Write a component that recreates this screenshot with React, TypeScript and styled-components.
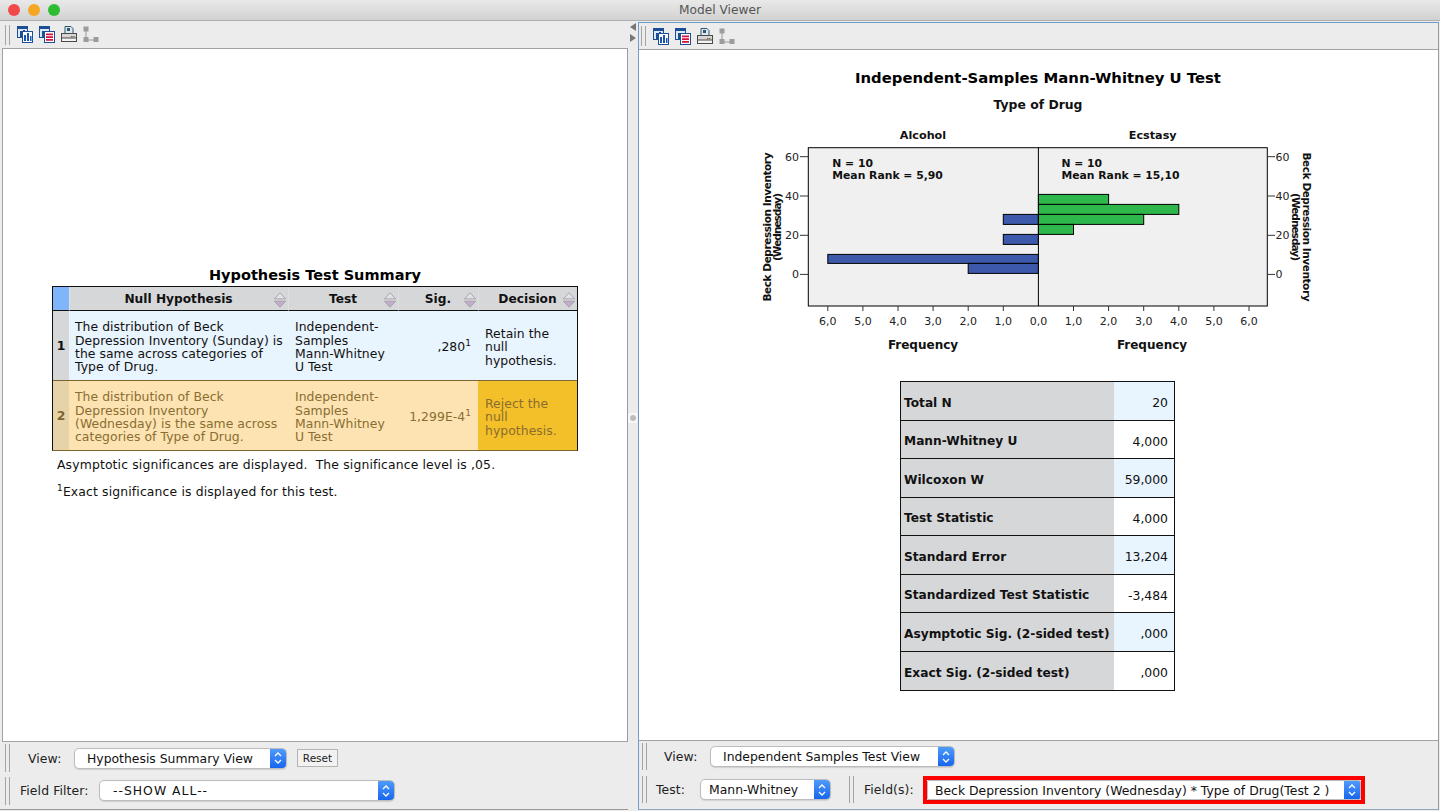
import * as React from 'react';
import styled, { createGlobalStyle } from 'styled-components';

const FONT = '"DejaVu Sans", "Noto Sans", sans-serif';

const GlobalStyle = createGlobalStyle`
  html, body {
    margin: 0;
    padding: 0;
    background: #ececec;
    font-family: ${FONT};
    overflow: hidden;
  }
  * { box-sizing: border-box; }
`;

const Window = styled.div`
  width: 1440px;
  height: 811px;
  display: flex;
  flex-direction: column;
  background: #ececec;
  color: #111;
`;

const TitleBar = styled.div`
  height: 21px;
  flex: none;
  display: grid;
  grid-template-columns: 200px 1fr 200px;
  align-items: center;
  background: linear-gradient(#e9e9e9, #d2d2d2);
  border-bottom: 1px solid #aeaeae;
`;

const Lights = styled.div`
  display: flex;
  gap: 8px;
  padding-left: 8px;
`;

const Light = styled.span<{ $color: string }>`
  width: 12px;
  height: 12px;
  border-radius: 50%;
  background: ${(p) => p.$color};
`;

const WindowTitle = styled.div`
  text-align: center;
  font-size: 12.2px;
  color: #555;
`;

const Panes = styled.div`
  flex: 1;
  display: grid;
  grid-template-columns: 628px 10px 802px;
  min-height: 0;
`;

const LeftPane = styled.section`
  display: flex;
  flex-direction: column;
  padding-left: 2px;
  margin-bottom: 1px;
  border-bottom: 1px solid #9a9a9a;
  min-height: 0;
`;

const RightPane = styled.section`
  display: flex;
  flex-direction: column;
  border: 1px solid #6d9ccb;
  border-bottom-color: #8fa6ba;
  border-right-color: #9a9a9a;
  margin: 1px 1px 1px 0;
  min-height: 0;
`;

const Toolbar = styled.div<{ $pad: number; $h: number }>`
  height: ${(p) => p.$h}px;
  flex: none;
  display: flex;
  align-items: center;
  gap: 6px;
  padding-left: ${(p) => p.$pad}px;
`;

const Grip = styled.span<{ $h: number }>`
  flex: none;
  width: 5px;
  height: ${(p) => p.$h}px;
  border-left: 1px solid #a4a4a4;
  border-right: 1px solid #a4a4a4;
`;

const ToolIcons = styled.div`
  display: flex;
  gap: 6px;
  margin-left: 1px;
`;

const Splitter = styled.div`
  display: flex;
  flex-direction: column;
  align-items: flex-start;
  padding-top: 2px;
  gap: 3px;
`;

const SplitArrow = styled.svg`
  display: block;
  margin-left: 2px;
`;

const SplitHandle = styled.div`
  margin-top: 368px;
  width: 9px;
  height: 10px;
  background: #f8f8f8;
  display: flex;
  align-items: center;
  justify-content: center;
  &::after {
    content: '';
    width: 6px;
    height: 6px;
    border-radius: 50%;
    background: #bdbdbd;
  }
`;

const LeftCanvas = styled.div`
  flex: 1;
  min-height: 0;
  background: #fff;
  border: 1px solid #a2a2a2;
  border-right-color: #9a9a9a;
  padding: 216px 0 0 49px;
`;

const RightCanvas = styled.div`
  height: 692px;
  flex: none;
  background: #fff;
  border-top: 1px solid #a2a2a2;
  border-bottom: 1px solid #a2a2a2;
  display: flex;
  flex-direction: column;
  align-items: center;
  padding: 18px 1px 0 0;
`;

const SummaryTitle = styled.h2`
  margin: 0 0 1px;
  width: 526px;
  text-align: center;
  font-size: 14.5px;
  line-height: 20px;
  font-weight: 700;
  color: #000;
`;

const SummaryGrid = styled.div`
  width: 526px;
  display: grid;
  grid-template-columns: 16px 219px 110px 80px 99px;
  grid-template-rows: 24px 69px 70px;
  border: 1px solid #111;
  border-bottom-color: #7d6430;
  font-size: 12.4px;
  line-height: 13.4px;
  letter-spacing: 0.05px;
`;

const Corner = styled.div`
  background: #80b5fb;
  border-bottom: 1px solid #111;
`;

const HeaderCell = styled.div`
  display: flex;
  align-items: center;
  background: #d6d7d9;
  border-bottom: 1px solid #111;
  border-left: 1px solid #dedfe1;
  padding: 3px 1px 0 14px;
  font-weight: 700;
  font-size: 12.2px;
  letter-spacing: 0;
  color: #111;
`;

const HeaderLabel = styled.span`
  flex: 1;
  text-align: center;
`;

const RowHead = styled.div<{ $reject?: boolean }>`
  display: flex;
  align-items: center;
  justify-content: center;
  font-weight: 700;
  background: ${(p) => (p.$reject ? '#e6d3a7' : '#d6d7d9')};
  color: ${(p) => (p.$reject ? '#7d6430' : '#111')};
  border-top: ${(p) => (p.$reject ? '1px solid #7d6430' : '0')};
`;

const BodyCell = styled.div<{ $reject?: boolean; $decision?: boolean; $right?: boolean; $inset: number }>`
  display: flex;
  align-items: center;
  justify-content: ${(p) => (p.$right ? 'flex-end' : 'flex-start')};
  padding: 3px ${(p) => (p.$right ? 7 : 0)}px 0 ${(p) => p.$inset}px;
  background: ${(p) => (p.$decision && p.$reject ? '#f4c029' : p.$reject ? '#fce3b1' : '#e8f4fe')};
  color: ${(p) => (p.$reject ? '#8a6d31' : '#111')};
  border-top: ${(p) => (p.$reject ? '1px solid #7d6430' : '0')};
  white-space: pre-line;
`;

const Note = styled.p`
  margin: 0;
  padding-left: 5px;
  font-size: 12.4px;
  line-height: 15px;
  letter-spacing: 0.14px;
  color: #111;
  white-space: pre-wrap;
`;

const FirstNote = styled(Note)`
  margin-top: 6px;
`;

const SecondNote = styled(Note)`
  margin-top: 12px;
`;

const Super = styled.sup`
  font-size: 9px;
  line-height: 0;
`;

const ChartTitle = styled.h2`
  margin: 0;
  font-size: 14.85px;
  line-height: 20px;
  font-weight: 700;
  color: #000;
`;

const ChartSubTitle = styled.h3`
  margin: 8px 0 0;
  font-size: 12.4px;
  line-height: 18px;
  font-weight: 700;
  color: #111;
`;

const ChartSvg = styled.svg`
  display: block;
  flex: none;
  margin-top: 8px;
  font-family: ${FONT};
`;

const StatsTable = styled.div`
  margin: 23px 1px 0 0;
  width: 275px;
  border: 1px solid #111;
  display: grid;
  grid-template-columns: 213px 60px;
  grid-auto-rows: 38.5px;
`;

const StatLabel = styled.div<{ $last?: boolean }>`
  display: flex;
  align-items: center;
  padding: 4px 0 0 3px;
  background: #d6d7d9;
  font-size: 12.2px;
  font-weight: 700;
  color: #111;
  white-space: nowrap;
  border-bottom: ${(p) => (p.$last ? '0' : '1px solid #111')};
`;

const StatValue = styled.div<{ $tint: boolean; $last?: boolean }>`
  display: flex;
  align-items: center;
  justify-content: flex-end;
  padding: 4px 6px 0 0;
  background: ${(p) => (p.$tint ? '#e8f4fe' : '#fff')};
  font-size: 12.4px;
  color: #111;
  border-bottom: ${(p) => (p.$last ? '0' : '1px solid #111')};
`;

const Footer = styled.div`
  flex: none;
  padding-bottom: 2px;
  display: flex;
  flex-direction: column;
`;

const FooterRow = styled.div<{ $h: number; $pad: number }>`
  height: ${(p) => p.$h}px;
  flex: none;
  display: flex;
  align-items: center;
  padding-left: ${(p) => p.$pad}px;
`;

const FieldLabel = styled.label<{ $left: number; $width: number }>`
  flex: none;
  margin-left: ${(p) => p.$left}px;
  width: ${(p) => p.$width}px;
  font-size: 12.4px;
  letter-spacing: 0.1px;
  color: #222;
`;

const SelectBox = styled.div<{ $width: number; $pad: number; $flat?: boolean; $tracking?: number }>`
  flex: none;
  width: ${(p) => p.$width}px;
  height: ${(p) => (p.$flat ? 20 : 21)}px;
  display: flex;
  align-items: stretch;
  border-radius: ${(p) => (p.$flat ? 2 : 5)}px;
  border: 1px solid #bcbcbc;
  background: #fff;
  overflow: hidden;
  font-size: 12.4px;
  color: #111;
  box-shadow: 0 1px 1px rgba(0, 0, 0, 0.12);
  span:first-child {
    flex: 1;
    padding-left: ${(p) => p.$pad}px;
    line-height: 19px;
    white-space: pre;
    letter-spacing: ${(p) => p.$tracking ?? 0}px;
  }
`;

const Stepper = styled.span`
  flex: none;
  width: 16px;
  display: flex;
  align-items: center;
  justify-content: center;
  background: linear-gradient(#4f9bfb, #1766ee);
`;

const ResetButton = styled.button`
  flex: none;
  margin-left: 10px;
  width: 41px;
  height: 18px;
  padding: 0;
  background: #f2f2f2;
  border: 1px solid #b4b4b4;
  font-family: ${FONT};
  font-size: 10.5px;
  color: #222;
`;

const HighlightBox = styled.div`
  flex: none;
  margin-left: 11px;
  height: 28px;
  display: flex;
  align-items: center;
  background: #fff;
  border: 4px solid #ff0000;
`;

const SplitGrip = styled(Grip)`
  margin-left: 18px;
`;

const SortArrows = () => (
  <svg width="14" height="16" viewBox="0 0 14 16" aria-hidden="true">
    <path d="M7 0.8 L12.6 6.8 H1.4 Z" fill="#e4e0e8" stroke="#a09ba6" strokeWidth="0.8" />
    <path d="M7 15.2 L12.6 9.2 H1.4 Z" fill="#c5abcd" stroke="#a09ba6" strokeWidth="0.8" />
  </svg>
);

const StepperGlyph = () => (
  <svg width="8" height="14" viewBox="0 0 8 14" aria-hidden="true">
    <path d="M1 5 L4 2 L7 5 M1 9 L4 12 L7 9" fill="none" stroke="#fff" strokeWidth="1.3" />
  </svg>
);

const ChartsIcon = () => (
  <svg width="16" height="17" viewBox="0 0 16 17" aria-hidden="true">
    <rect x="0.5" y="0.5" width="10" height="11" fill="#dbe8f5" stroke="#1d4f96" />
    <rect x="0.5" y="0.5" width="10" height="2.5" fill="#1d4f96" />
    <path d="M3 5h2v6H3zM6 4h2v7H6z" fill="#1d4f96" />
    <rect x="5.5" y="5.5" width="10" height="11" fill="#fff" stroke="#1d4f96" />
    <path d="M7 9h2v6H7zM10 7h2v8h-2zM13 10h1.5v5H13z" fill="#1a55ad" />
  </svg>
);

const TablesIcon = () => (
  <svg width="16" height="17" viewBox="0 0 16 17" aria-hidden="true">
    <rect x="0.5" y="0.5" width="10" height="11" fill="#dbe8f5" stroke="#1d4f96" />
    <rect x="0.5" y="0.5" width="10" height="2.5" fill="#1d4f96" />
    <path d="M3 5h2v6H3z" fill="#1d4f96" />
    <rect x="5.5" y="5.5" width="10" height="11" fill="#fff" stroke="#1d4f96" />
    <path d="M7 7.5h7v1.7H7zM7 10.3h7V12H7zM7 13h7v1.7H7z" fill="#d3123f" />
  </svg>
);

const PrinterIcon = () => (
  <svg width="16" height="17" viewBox="0 0 16 17" aria-hidden="true">
    <path d="M4 .5h6l2 2v6H4z" fill="#dce6ef" stroke="#31566f" />
    <rect x="6" y="2" width="3" height="3" fill="#31566f" />
    <rect x="0.5" y="7.5" width="15" height="7" fill="#d6d6d6" stroke="#4a4a4a" />
    <rect x="0.5" y="12" width="15" height="3.5" fill="#f3f3f3" stroke="#4a4a4a" />
    <rect x="10" y="10" width="1.5" height="1.2" fill="#c63a3a" />
    <rect x="12" y="10" width="1.5" height="1.2" fill="#4aa04a" />
  </svg>
);

const TreeIcon = () => (
  <svg width="16" height="17" viewBox="0 0 16 17" aria-hidden="true">
    <path d="M3 3v11h10" fill="none" stroke="#9a9a9a" strokeWidth="1" />
    <rect x="0.5" y="0.5" width="5" height="5" fill="#9c9c9c" />
    <rect x="0.5" y="11" width="5" height="5" fill="#9c9c9c" />
    <rect x="10.5" y="11" width="5" height="5" fill="#9c9c9c" />
  </svg>
);

const Tools = () => (
  <ToolIcons>
    <ChartsIcon />
    <TablesIcon />
    <PrinterIcon />
    <TreeIcon />
  </ToolIcons>
);

const Select = ({ text, width, pad, flat, tracking }: { text: string; width: number; pad: number; flat?: boolean; tracking?: number }) => (
  <SelectBox $width={width} $pad={pad} $flat={flat} $tracking={tracking}>
    <span>{text}</span>
    <Stepper>
      <StepperGlyph />
    </Stepper>
  </SelectBox>
);

const hypotheses = [
  {
    reject: false,
    text: 'The distribution of Beck\nDepression Inventory (Sunday) is\nthe same across categories of\nType of Drug.',
    sig: ',280',
    decision: 'Retain the\nnull\nhypothesis.',
  },
  {
    reject: true,
    text: 'The distribution of Beck\nDepression Inventory\n(Wednesday) is the same across\ncategories of Type of Drug.',
    sig: '1,299E-4',
    decision: 'Reject the\nnull\nhypothesis.',
  },
];

const stats = [
  ['Total N', '20'],
  ['Mann-Whitney U', '4,000'],
  ['Wilcoxon W', '59,000'],
  ['Test Statistic', '4,000'],
  ['Standard Error', '13,204'],
  ['Standardized Test Statistic', '-3,484'],
  ['Asymptotic Sig. (2-sided test)', ',000'],
  ['Exact Sig. (2-sided test)', ',000'],
];

// screen coordinates of the chart, used directly through the viewBox
const ZERO = 1038.4;
const UNIT = 35.1;
const TOP = 147.7;
const BOTTOM = 306;
const LEFT = 808.3;
const RIGHT = 1267.3;
const BLUE = '#3c59ab';
const GREEN = '#2eb84b';

const greenBars = [
  { y: 194.4, h: 10, n: 2 },
  { y: 204.4, h: 10, n: 4 },
  { y: 214.4, h: 10, n: 3 },
  { y: 224.4, h: 10, n: 1 },
];
const blueBars = [
  { y: 214.4, h: 10, n: 1 },
  { y: 234.4, h: 10, n: 1 },
  { y: 254.4, h: 9, n: 6 },
  { y: 263.4, h: 10, n: 2 },
];
const yTicks = [
  { y: 156.7, label: '60' },
  { y: 196, label: '40' },
  { y: 235.3, label: '20' },
  { y: 274.4, label: '0' },
];
const units = [6, 5, 4, 3, 2, 1];

const Histogram = () => (
  <ChartSvg width={576} height={236} viewBox="750 122 576 236">
    <g fontSize="11.2" fontWeight="700" fill="#111" textAnchor="middle">
      <text x={923} y={139}>Alcohol</text>
      <text x={1152.7} y={139}>Ecstasy</text>
    </g>
    <rect x={LEFT} y={TOP} width={RIGHT - LEFT} height={BOTTOM - TOP} fill="#f0f0f0" stroke="#000" />
    {blueBars.map((b) => (
      <rect key={b.y} x={ZERO - b.n * UNIT} y={b.y} width={b.n * UNIT} height={b.h} fill={BLUE} stroke="#000" />
    ))}
    {greenBars.map((b) => (
      <rect key={b.y} x={ZERO} y={b.y} width={b.n * UNIT} height={b.h} fill={GREEN} stroke="#000" />
    ))}
    <line x1={ZERO} x2={ZERO} y1={TOP} y2={BOTTOM} stroke="#000" />
    {yTicks.map((t) => (
      <g key={t.label} fontSize="11" fill="#222">
        <line x1={800} x2={LEFT} y1={t.y} y2={t.y} stroke="#333" />
        <line x1={RIGHT} x2={1275} y1={t.y} y2={t.y} stroke="#333" />
        <text x={799} y={t.y + 4} textAnchor="end">{t.label}</text>
        <text x={1275.5} y={t.y + 4}>{t.label}</text>
      </g>
    ))}
    {units.map((u) => (
      <g key={u} fontSize="11" fill="#222" textAnchor="middle">
        <line x1={ZERO - u * UNIT} x2={ZERO - u * UNIT} y1={BOTTOM} y2={311} stroke="#333" />
        <line x1={ZERO + u * UNIT} x2={ZERO + u * UNIT} y1={BOTTOM} y2={311} stroke="#333" />
        <text x={ZERO - u * UNIT} y={325}>{u},0</text>
        <text x={ZERO + u * UNIT} y={325}>{u},0</text>
      </g>
    ))}
    <text x={1038.4} y={325} fontSize="11" fill="#222" textAnchor="middle">0,0</text>
    <g fontSize="10.8" fontWeight="700" fill="#111">
      <text x={832.3} y={166.5}>N = 10</text>
      <text x={832.3} y={178.5}>Mean Rank = 5,90</text>
      <text x={1061.5} y={166.5}>N = 10</text>
      <text x={1061.5} y={178.5}>Mean Rank = 15,10</text>
    </g>
    <g fontSize="12" fontWeight="700" fill="#111" textAnchor="middle">
      <text x={923} y={349}>Frequency</text>
      <text x={1152} y={349}>Frequency</text>
    </g>
    <g fontSize="10.5" fontWeight="700" fill="#111" textAnchor="middle" lengthAdjust="spacingAndGlyphs">
      <text transform="translate(771 227) rotate(-90)" textLength={149}>Beck Depression Inventory</text>
      <text transform="translate(781 227) rotate(-90)" textLength={68}>(Wednesday)</text>
      <text transform="translate(1303 227) rotate(90)" textLength={149}>Beck Depression Inventory</text>
      <text transform="translate(1292 227) rotate(90)" textLength={68}>(Wednesday)</text>
    </g>
  </ChartSvg>
);

const App = () => (
  <Window>
    <GlobalStyle />
    <TitleBar>
      <Lights>
        <Light $color="#f24a4a" />
        <Light $color="#f6a623" />
        <Light $color="#2cbd33" />
      </Lights>
      <WindowTitle>Model Viewer</WindowTitle>
    </TitleBar>
    <Panes>
      <LeftPane>
        <Toolbar $pad={3} $h={27}>
          <Grip $h={20} />
          <Tools />
        </Toolbar>
        <LeftCanvas>
          <SummaryTitle>Hypothesis Test Summary</SummaryTitle>
          <SummaryGrid>
            <Corner />
            {['Null Hypothesis', 'Test', 'Sig.', 'Decision'].map((h) => (
              <HeaderCell key={h}>
                <HeaderLabel>{h}</HeaderLabel>
                <SortArrows />
              </HeaderCell>
            ))}
            {hypotheses.map((r, i) => (
              <React.Fragment key={r.sig}>
                <RowHead $reject={r.reject}>{i + 1}</RowHead>
                <BodyCell $reject={r.reject} $inset={6}>{r.text}</BodyCell>
                <BodyCell $reject={r.reject} $inset={7}>{'Independent-\nSamples\nMann-Whitney\nU Test'}</BodyCell>
                <BodyCell $reject={r.reject} $inset={0} $right>
                  <span>{r.sig}<Super>1</Super></span>
                </BodyCell>
                <BodyCell $reject={r.reject} $inset={7} $decision>{r.decision}</BodyCell>
              </React.Fragment>
            ))}
          </SummaryGrid>
          <FirstNote>Asymptotic significances are displayed.  The significance level is ,05.</FirstNote>
          <SecondNote><Super>1</Super>Exact significance is displayed for this test.</SecondNote>
        </LeftCanvas>
        <Footer>
          <FooterRow $h={32} $pad={3}>
            <Grip $h={28} />
            <FieldLabel $left={18} $width={46}>View:</FieldLabel>
            <Select text="Hypothesis Summary View" width={213} pad={12} />
            <ResetButton>Reset</ResetButton>
          </FooterRow>
          <FooterRow $h={33} $pad={3}>
            <Grip $h={28} />
            <FieldLabel $left={10} $width={79}>Field Filter:</FieldLabel>
            <Select text="--SHOW ALL--" width={296} pad={13} tracking={1} />
          </FooterRow>
        </Footer>
      </LeftPane>
      <Splitter>
        <SplitArrow width="6" height="8" viewBox="0 0 6 8" aria-hidden="true">
          <path d="M6 0v8L0 4z" fill="#777" />
        </SplitArrow>
        <SplitArrow width="6" height="8" viewBox="0 0 6 8" aria-hidden="true">
          <path d="M0 0v8l6-4z" fill="#777" />
        </SplitArrow>
        <SplitHandle />
      </Splitter>
      <RightPane>
        <Toolbar $pad={2} $h={26}>
          <Grip $h={20} />
          <Tools />
        </Toolbar>
        <RightCanvas>
          <ChartTitle>Independent-Samples Mann-Whitney U Test</ChartTitle>
          <ChartSubTitle>Type of Drug</ChartSubTitle>
          <Histogram />
          <StatsTable>
            {stats.map(([label, value], i) => (
              <React.Fragment key={label}>
                <StatLabel $last={i === stats.length - 1}>{label}</StatLabel>
                <StatValue $tint={i % 2 === 0} $last={i === stats.length - 1}>{value}</StatValue>
              </React.Fragment>
            ))}
          </StatsTable>
        </RightCanvas>
        <Footer>
          <FooterRow $h={31} $pad={3}>
            <Grip $h={27} />
            <FieldLabel $left={17} $width={46}>View:</FieldLabel>
            <Select text="Independent Samples Test View" width={245} pad={12} />
          </FooterRow>
          <FooterRow $h={35} $pad={3}>
            <Grip $h={27} />
            <FieldLabel $left={9} $width={44}>Test:</FieldLabel>
            <Select text="Mann-Whitney" width={131} pad={8} />
            <SplitGrip $h={27} />
            <FieldLabel $left={10} $width={48}>Field(s):</FieldLabel>
            <HighlightBox>
              <Select text="Beck Depression Inventory (Wednesday) * Type of Drug(Test 2 )" width={434} pad={7} flat />
            </HighlightBox>
          </FooterRow>
        </Footer>
      </RightPane>
    </Panes>
  </Window>
);

export default App;
